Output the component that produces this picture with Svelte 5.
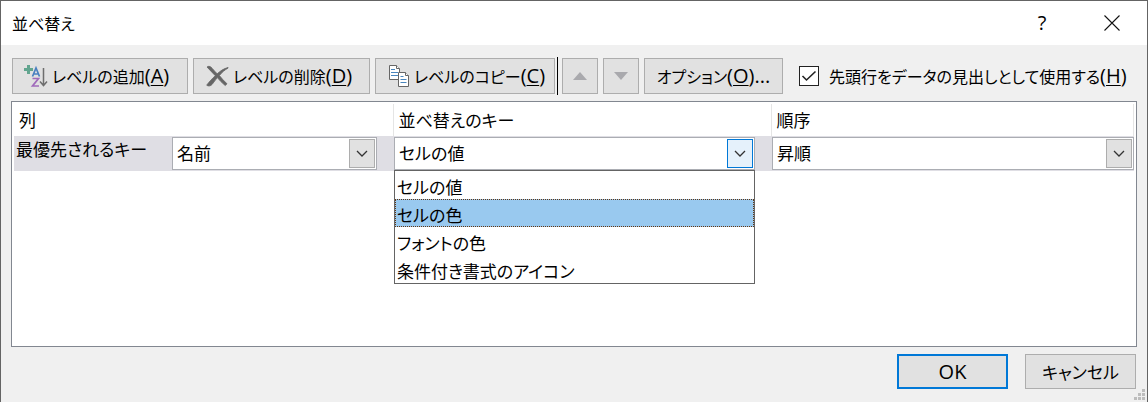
<script>
  const fields = [
    { id: 'column', value: '名前', options: ['名前'] },
    { id: 'sort-on', value: 'セルの値', options: ['セルの値', 'セルの色', 'フォントの色', '条件付き書式のアイコン'], open: true },
    { id: 'order', value: '昇順', options: ['昇順', '降順'] }
  ];
  const headings = ['列', '並べ替えのキー', '順序'];
  const highlighted = 'セルの色';
</script>

{#snippet accel(key)}<span class="latin">(<u>{key}</u>)</span>{/snippet}

<div class="dialog" role="dialog" aria-labelledby="dialog-title">
  <header class="titlebar">
    <h1 id="dialog-title">並べ替え</h1>
    <button class="caption help" aria-label="ヘルプ">?</button>
    <button class="caption" aria-label="閉じる">
      <svg width="16" height="16" viewBox="0 0 16 16" fill="none" stroke="#111" stroke-width="1.1"><path d="M.5.5l15 15M15.500.5l-15 15" /></svg>
    </button>
  </header>

  <main>
    <div class="toolbar">
      <button class="btn tool add">
        <svg width="24" height="24" viewBox="0 0 24 24" fill="none">
          <path d="M4.500 1v9M0 5.500h9" stroke="#62a58f" stroke-width="3" />
          <path d="M8.500 12.500L12 4l3.500 8.500M9.700 10h4.600" stroke="#4a80c0" stroke-width="1.700" />
          <path d="M8.500 14.500h6l-6 7.500h6.500" stroke="#a06bbb" stroke-width="1.700" />
          <path d="M19.500 4v17M16 17.500l3.500 4 3.500-4" stroke="#6e6e6e" stroke-width="1.500" />
        </svg>
        <span>レベルの追加{@render accel('A')}</span>
      </button>
      <button class="btn tool delete">
        <svg width="24" height="24" viewBox="0 0 24 24" fill="#666" stroke="#666" stroke-width=".8">
          <path d="M2 3C3.500 1.800 5.500 2.300 7 4.200c2 2.200 3.500 4 5.200 5.600C15 7.200 18.500 4.700 23 3.500l.2.500c-3.500 1.900-6.400 4.500-8.800 7.600 2.300 2.800 4.700 5.600 7.600 8.200l-1.800 1.700c-3-2.400-5.600-5.100-7.900-7.900-1.800 2.200-3.500 4.500-5.100 6.700-1.500 1.900-4 2.100-5.500.9 2.700-3.700 5.600-6.700 8.600-9.500C7.300 8.600 4.500 5.600 2 3z" />
        </svg>
        <span>レベルの削除{@render accel('D')}</span>
      </button>
      <button class="btn tool copy">
        <svg width="22" height="24" viewBox="0 0 22 24" fill="#fff" stroke="#666" stroke-width="1">
          <path d="M1.500 1.500h7l3 3v11h-10z" /><path d="M8.500 1.500v3h3" />
          <path d="M3 5.500h4M3 8.500h7M3 11.500h7" stroke="#4a86bd" />
          <path d="M10.500 8.500h7l3 3v11h-10z" /><path d="M17.500 8.500v3h3" />
          <path d="M12.500 12.500h3M12.500 15.500h6M12.500 18.500h6" stroke="#4a86bd" />
        </svg>
        <span>レベルのコピー{@render accel('C')}</span>
      </button>
      <span class="divider"></span>
      <button class="btn move" disabled aria-label="上へ移動">
        <svg width="14" height="8" viewBox="0 0 14 8" fill="#a9a9ad"><path d="M7 0l7 8H0z" /></svg>
      </button>
      <button class="btn move" disabled aria-label="下へ移動">
        <svg width="14" height="8" viewBox="0 0 14 8" fill="#a9a9ad"><path d="M0 0h14L7 8z" /></svg>
      </button>
      <button class="btn options"><span>オプション{@render accel('O')}<span class="latin">...</span></span></button>
      <label class="check">
        <input type="checkbox" checked />
        <span>先頭行をデータの見出しとして使用する{@render accel('H')}</span>
      </label>
    </div>

    <div class="levels">
      <table>
        <colgroup><col class="c1" /><col class="c2" /><col /></colgroup>
        <thead>
          <tr>{#each headings as heading}<th scope="col">{heading}</th>{/each}</tr>
        </thead>
        <tbody>
          <tr>
            {#each fields as field, i}
              <td>
                <div class="cell">
                  {#if i === 0}<label class="level" for={field.id}>最優先されるキー</label>{/if}
                  <div class="combo" class:open={field.open}>
                    <select id={field.id} aria-label={i ? headings[i] : undefined} value={field.value}>
                      {#each field.options as option}<option>{option}</option>{/each}
                    </select>
                    <span class="arrow">
                      <svg width="12" height="7" viewBox="0 0 12 7" fill="none" stroke="#333" stroke-width="1.300"><path d="M1 1l5 5 5-5" /></svg>
                    </span>
                    {#if field.open}
                      <ul class="list" role="listbox" aria-label={headings[i]}>
                        {#each field.options as option}
                          <li role="option" aria-selected={option === highlighted}>{option}</li>
                        {/each}
                      </ul>
                    {/if}
                  </div>
                </div>
              </td>
            {/each}
          </tr>
        </tbody>
      </table>
    </div>

    <footer>
      <button class="btn action primary"><span class="latin">OK</span></button>
      <button class="btn action">キャンセル</button>
    </footer>
  </main>
  <svg class="grip" width="11" height="11" viewBox="0 0 11 11" fill="#bdbdbd"><path d="M8 0h3v3H8zM4 4h3v3H4zM8 4h3v3H8zM0 8h3v3H0zM4 8h3v3H4zM8 8h3v3H8z" /></svg>
</div>

<style>
  :global(body) { background: #f0f0f0; }
  .dialog, .dialog * { box-sizing: border-box; }
  .dialog {
    position: relative;
    display: flex;
    flex-direction: column;
    min-height: 100vh;
    border: 1px solid #646464;
    border-bottom: 0;
    background: #f0f0f0;
    color: #000;
    font: 17px/24px "Noto Sans CJK JP", sans-serif;
    font-feature-settings: "palt";
  }
  button, select, input { font: inherit; font-feature-settings: inherit; color: inherit; margin: 0; }
  svg { flex: none; }
  .latin { font-family: "Open Sans", sans-serif; font-size: 20px; }
  u { text-decoration-thickness: 1px; text-underline-offset: 2px; }
  .titlebar { display: flex; align-items: center; height: 44px; background: #fff; padding-left: 11px; }
  h1 { flex: 1; margin: 0; font-size: 16px; font-weight: 400; }
  .caption {
    display: grid;
    place-items: center;
    width: 70px;
    height: 44px;
    padding: 0;
    border: 0;
    background: none;
  }
  .help { font-family: "Open Sans", sans-serif; font-size: 20px; }
  main { flex: 1; display: flex; flex-direction: column; padding: 12px 10px 13px; }
  .toolbar { display: flex; align-items: center; gap: 5px; padding-left: 1px; font-size: 16px; white-space: nowrap; }
  .btn {
    display: flex;
    align-items: center;
    justify-content: center;
    flex: none;
    height: 36px;
    padding: 0;
    border: 1px solid #adadad;
    background: #e1e1e1;
  }
  .tool { justify-content: flex-start; gap: 4px; padding-left: 11px; }
  .add { width: 176px; }
  .delete { width: 177px; }
  .copy { width: 180px; padding-left: 12px; }
  .divider { flex: none; width: 1px; height: 38px; margin: 0 -1px 0 -3px; background: #000; }
  .move { width: 36px; }
  .options { width: 139px; }
  .check { display: flex; align-items: center; gap: 10px; margin-left: 11px; }
  .check input {
    appearance: none;
    flex: none;
    width: 20px;
    height: 20px;
    border: 1px solid #222;
    background: #fff url("data:image/svg+xml,%3Csvg xmlns='http://www.w3.org/2000/svg' viewBox='0 0 18 18' fill='none' stroke='%23222' stroke-width='1.6'%3E%3Cpath d='M2.500 9l4 4L15.500 4.500'/%3E%3C/svg%3E");
  }
  .levels { flex: 1; margin-top: 6px; padding: 2px; border: 1px solid #828790; background: #fff; }
  table { width: 100%; border-collapse: collapse; table-layout: fixed; }
  .c1 { width: 379px; }
  .c2 { width: 378px; }
  th {
    height: 32px;
    padding: 0 0 0 5px;
    border-right: 1px solid #e5e5e5;
    text-align: left;
    font-weight: 400;
  }
  td { padding: 1px 0 1px 1px; background: #dfdee4; }
  td:first-child { padding-left: 2px; }
  .cell { display: flex; justify-content: space-between; }
  .combo { position: relative; flex: 1; margin-right: 16px; }
  td:last-child .combo { margin-right: 0; }
  .level { width: 156px; }
  select {
    appearance: none;
    display: block;
    width: 100%;
    height: 33px;
    padding: 0 30px 2px 4px;
    border: 1px solid #abadb3;
    border-radius: 0;
    background: #fff;
  }
  .arrow {
    position: absolute;
    top: 2px;
    right: 2px;
    bottom: 2px;
    display: grid;
    place-items: center;
    width: 26px;
    border: 1px solid #adadad;
    background: #e1e1e1;
    pointer-events: none;
  }
  .open .arrow { border-color: #0078d7; background: #e5f1fb; }
  .list {
    position: absolute;
    z-index: 1;
    top: 100%;
    left: 0;
    right: 0;
    margin: 0;
    padding: 0;
    border: 1px solid #646464;
    background: #fff;
    list-style: none;
  }
  li { height: 28px; padding: 4px 2px 0; }
  li[aria-selected="true"] { background: #99c9ef; outline: 1px dotted #663610; outline-offset: -1px; }
  footer { display: flex; justify-content: flex-end; gap: 17px; margin-top: 7px; padding-right: 1px; }
  .action { width: 111px; height: 35px; }
  .primary { border: 2px solid #0078d7; }
  .grip { position: absolute; right: 2px; bottom: 2px; }
</style>
